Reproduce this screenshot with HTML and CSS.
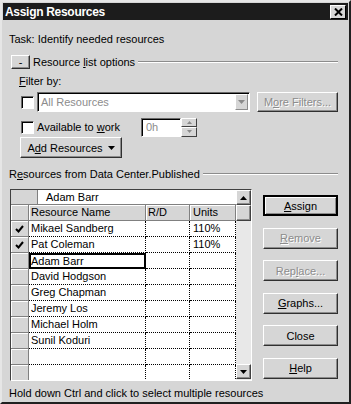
FILE: index.html
```html
<!DOCTYPE html>
<html>
<head>
<title>Assign Resources</title>
<meta name=viewport content="width=device-width, initial-scale=1">
<link rel="stylesheet" href="styles.css">
</head>
<body>
<div class=window>
 <div class=titlebar>
  <span class=title>Assign Resources</span>
  <span class=closebox><svg width="9" height="8" viewBox="0 0 9 8"><path d="M1 0.5 L8 7.5 M8 0.5 L1 7.5" stroke="#000" stroke-width="2"/></svg></span>
 </div>
 <div class=content>
  <div class=task>Task: Identify needed resources</div>

  <div class=options>
   <span class="btn small">-</span>
   <span class=optlabel>Resource <u>l</u>ist options</span>
   <span class=etch></span>
  </div>

  <div class=filterby><u>F</u>ilter by:</div>

  <div class=filterrow>
   <span class=check></span>
   <span class="combo disabled">
    <span class=combotext>All Resources</span>
    <span class=dropbtn><svg width="7" height="4" viewBox="0 0 7 4"><path d="M0 0 H7 L3.5 4 Z" fill="#8a8a8a"/></svg></span>
   </span>
   <span class="btn disabled morebtn"><span>M<u>o</u>re Filters...</span></span>
  </div>

  <div class=availrow>
   <span class=check></span>
   <span class=availlabel>Available to <u>w</u>ork</span>
   <span class=spin>
    <span class=spintext>0h</span>
    <span class=spinbtns>
     <span class=spinbtn><svg width="5" height="3" viewBox="0 0 5 3"><path d="M2.5 0 L5 3 H0 Z" fill="#8a8a8a"/></svg></span>
     <span class=spinbtn><svg width="5" height="3" viewBox="0 0 5 3"><path d="M0 0 H5 L2.5 3 Z" fill="#8a8a8a"/></svg></span>
    </span>
   </span>
  </div>

  <span class="btn addbtn"><span>A<u>d</u>d Resources</span> <svg width="7" height="4" viewBox="0 0 7 4"><path d="M0 0 H7 L3.5 4 Z" fill="#000"/></svg></span>

  <div class="options resgroup">
   <span class=reslabel>R<u>e</u>sources from Data Center.Published</span>
   <span class=etch></span>
  </div>

  <div class=main>
   <div class=grid>
    <div class=sheet>
     <div class=editbar>
      <span class=editcorner></span>
      <span class=editfield>Adam Barr</span>
     </div>
     <div class=cells>
      <div class=hcell></div>
      <div class="hcell col">Resource Name</div>
      <div class="hcell col">R/D</div>
      <div class="hcell col units">Units</div>

      <div class=hcell><svg class=tick width="9" height="8" viewBox="0 0 9 8"><path d="M1 4 L3.5 6.5 L8 1" stroke="#000" stroke-width="2" fill="none"/></svg></div>
      <div class=cell>Mikael Sandberg</div><div class=cell></div><div class="cell units">110%</div>

      <div class=hcell><svg class=tick width="9" height="8" viewBox="0 0 9 8"><path d="M1 4 L3.5 6.5 L8 1" stroke="#000" stroke-width="2" fill="none"/></svg></div>
      <div class=cell>Pat Coleman</div><div class=cell></div><div class="cell units">110%</div>

      <div class=hcell></div>
      <div class="cell selected">Adam Barr</div><div class=cell></div><div class=cell></div>

      <div class=hcell></div>
      <div class=cell>David Hodgson</div><div class=cell></div><div class=cell></div>

      <div class=hcell></div>
      <div class=cell>Greg Chapman</div><div class=cell></div><div class=cell></div>

      <div class=hcell></div>
      <div class=cell>Jeremy Los</div><div class=cell></div><div class=cell></div>

      <div class=hcell></div>
      <div class=cell>Michael Holm</div><div class=cell></div><div class=cell></div>

      <div class=hcell></div>
      <div class=cell>Sunil Koduri</div><div class=cell></div><div class=cell></div>

      <div class=hcell></div>
      <div class=cell></div><div class=cell></div><div class=cell></div>

      <div class=hcell></div>
      <div class=cell></div><div class=cell></div><div class=cell></div>
     </div>
    </div>
    <div class=vscroll>
     <span class=sbtn><svg width="7" height="4" viewBox="0 0 7 4"><path d="M3.5 0 L7 4 H0 Z" fill="#000"/></svg></span>
     <span class=thumb></span>
     <span class=track></span>
     <span class=sbtn><svg width="7" height="4" viewBox="0 0 7 4"><path d="M0 0 H7 L3.5 4 Z" fill="#000"/></svg></span>
     <span class=trackend></span>
    </div>
   </div>

   <div class=buttons>
    <span class="btn default"><span><u>A</u>ssign</span></span>
    <span class="btn disabled"><span><u>R</u>emove</span></span>
    <span class="btn disabled"><span>Rep<u>l</u>ace...</span></span>
    <span class=btn><span><u>G</u>raphs...</span></span>
    <span class=btn><span>Close</span></span>
    <span class=btn><span><u>H</u>elp</span></span>
   </div>
  </div>

  <div class=status>Hold down Ctrl and click to select multiple resources</div>
 </div>
</div>
</body>
</html>
```

FILE: styles.css
```css
body {
 margin:0;
 background:#d6d6d6;
 font-family:"Liberation Sans",Arial,sans-serif;
 font-size:11px;
 color:#000;
}
.window {
 width:351px;
 height:404px;
 box-sizing:border-box;
 border:2px solid;
 border-color:#e6e6e6 #202020 #202020 #e6e6e6;
 background:#d6d6d6;
 overflow:hidden;
}
.titlebar {
 margin:1px 1px 0 1px;
 height:17px;
 background:#1c1c1c;
 display:flex;
 align-items:center;
 justify-content:space-between;
 padding:0 2px 0 2px;
}
.title {
 color:#fff;
 font-weight:bold;
 font-size:12px;
 letter-spacing:-0.3px;
}
.closebox {
 width:16px;
 height:14px;
 box-sizing:border-box;
 background:#d6d6d6;
 border:1px solid;
 border-color:#fff #000 #000 #fff;
 display:flex;
 align-items:center;
 justify-content:center;
}
.content {
 padding:0 11px 0 7px;
}
.task {
 margin-top:12px;
 height:14px;
 line-height:14px;
}
.options {
 margin-top:9px;
 height:14px;
 display:flex;
 align-items:center;
}
.optlabel {
 margin-left:3px;
}
.etch {
 flex:1;
 height:0;
 border-top:1px solid #8c8c8c;
 border-bottom:1px solid #fff;
 margin-left:3px;
}
.btn {
 display:inline-flex;
 align-items:center;
 justify-content:center;
 box-sizing:border-box;
 background:#d6d6d6;
 border:1px solid;
 border-color:#fff #303030 #303030 #fff;
 box-shadow:inset -1px -1px #8c8c8c;
 height:21px;
 white-space:nowrap;
}
.btn.small {
 width:19px;
 height:14px;
 margin-left:2px;
 line-height:12px;
}
.btn.disabled {
 color:#8c8c8c;
 text-shadow:1px 1px #fff;
}
.filterby {
 margin:5px 0 0 10px;
 height:14px;
 line-height:14px;
}
.filterrow {
 margin-top:4px;
 height:20px;
 display:flex;
 align-items:center;
}
.check {
 width:13px;
 height:13px;
 box-sizing:border-box;
 border:1px solid;
 border-color:#6a6a6a #fff #fff #6a6a6a;
 box-shadow:inset 1px 1px #000;
 background:#fff;
 margin-left:12px;
}
.combo {
 margin-left:3px;
 width:213px;
 height:20px;
 box-sizing:border-box;
 border:1px solid;
 border-color:#6a6a6a #fff #fff #6a6a6a;
 box-shadow:inset 1px 1px #000;
 background:#fff;
 display:flex;
 align-items:center;
}
.combotext {
 flex:1;
 padding-left:3px;
 color:#8c8c8c;
}
.dropbtn {
 width:13px;
 height:16px;
 margin-right:1px;
 box-sizing:border-box;
 background:#d6d6d6;
 border:1px solid;
 border-color:#fff #8c8c8c #8c8c8c #fff;
 display:flex;
 align-items:center;
 justify-content:center;
}
.morebtn {
 margin-left:7px;
 width:81px;
 height:20px;
}
.availrow {
 margin-top:6px;
 height:18px;
 display:flex;
 align-items:center;
}
.availlabel {
 margin-left:3px;
 width:104px;
}
.spin {
 width:56px;
 height:19px;
 display:flex;
}
.spintext {
 width:40px;
 box-sizing:border-box;
 border:1px solid;
 border-color:#6a6a6a #fff #fff #6a6a6a;
 box-shadow:inset 1px 1px #000;
 background:#fff;
 color:#8c8c8c;
 padding:2px 0 0 4px;
}
.spinbtns {
 width:16px;
 display:flex;
 flex-direction:column;
}
.spinbtn {
 flex:1;
 box-sizing:border-box;
 background:#d6d6d6;
 border:1px solid;
 border-color:#fff #404040 #404040 #fff;
 display:flex;
 align-items:center;
 justify-content:center;
}
.addbtn {
 margin:1px 0 0 11px;
 width:102px;
 gap:5px;
}
.reslabel {
 white-space:nowrap;
}
.addbtn + .options {
 margin-top:9px;
}
.main {
 margin-top:8px;
 display:flex;
 gap:11px;
}
.grid {
 margin-left:1px;
 width:242px;
 height:192px;
 box-sizing:border-box;
 border:1px solid;
 border-color:#404040 #fff #fff #404040;
 display:flex;
 overflow:hidden;
}
.sheet {
 width:225px;
 overflow:hidden;
 background:#fff;
}
.editbar {
 height:15px;
 display:flex;
 border-bottom:1px solid #808080;
 box-sizing:border-box;
}
.editcorner {
 width:27px;
 background:#d6d6d6;
 box-sizing:border-box;
 border-right:1px solid #808080;
}
.editfield {
 flex:1;
 padding-left:8px;
 line-height:14px;
 background:#fff;
}
.cells {
 display:grid;
 grid-template-columns:18px 117px 44px 46px;
 grid-auto-rows:16px;
}
.hcell, .cell {
 box-sizing:border-box;
 line-height:15px;
 white-space:nowrap;
 overflow:hidden;
}
.hcell {
 background:#d6d6d6;
 border-right:1px solid #808080;
 border-bottom:1px solid #808080;
 box-shadow:inset 1px 1px #fff;
 display:flex;
 align-items:center;
 justify-content:center;
}
.hcell.col {
 justify-content:flex-start;
 padding-left:2px;
}
.hcell.units, .cell.units {
 padding-left:3px;
}
.cell {
 border-right:1px dotted #000;
 border-bottom:1px dotted #000;
 padding-left:2px;
}
.cell.selected {
 box-shadow:inset 0 0 0 2px #000;
 border:none;
 line-height:16px;
}
.vscroll {
 width:15px;
 display:flex;
 flex-direction:column;
 background:#e8e8e8;
}
.sbtn, .thumb {
 box-sizing:border-box;
 background:#d6d6d6;
 border:1px solid;
 border-color:#fff #404040 #404040 #fff;
 box-shadow:inset -1px -1px #8c8c8c;
 display:flex;
 align-items:center;
 justify-content:center;
}
.sbtn {
 height:15px;
}
.thumb {
 height:16px;
}
.track {
 flex:1;
}
.trackend {
 height:1px;
}
.buttons {
 width:75px;
 padding-top:6px;
 display:flex;
 flex-direction:column;
 gap:11.6px;
}
.buttons .btn {
 height:21px;
}
.btn.default {
 border:2px solid #000;
 box-shadow:inset 1px 1px #fff, inset -1px -1px #8c8c8c;
}
.status {
 margin-top:5px;
 height:14px;
 line-height:14px;
}
```
